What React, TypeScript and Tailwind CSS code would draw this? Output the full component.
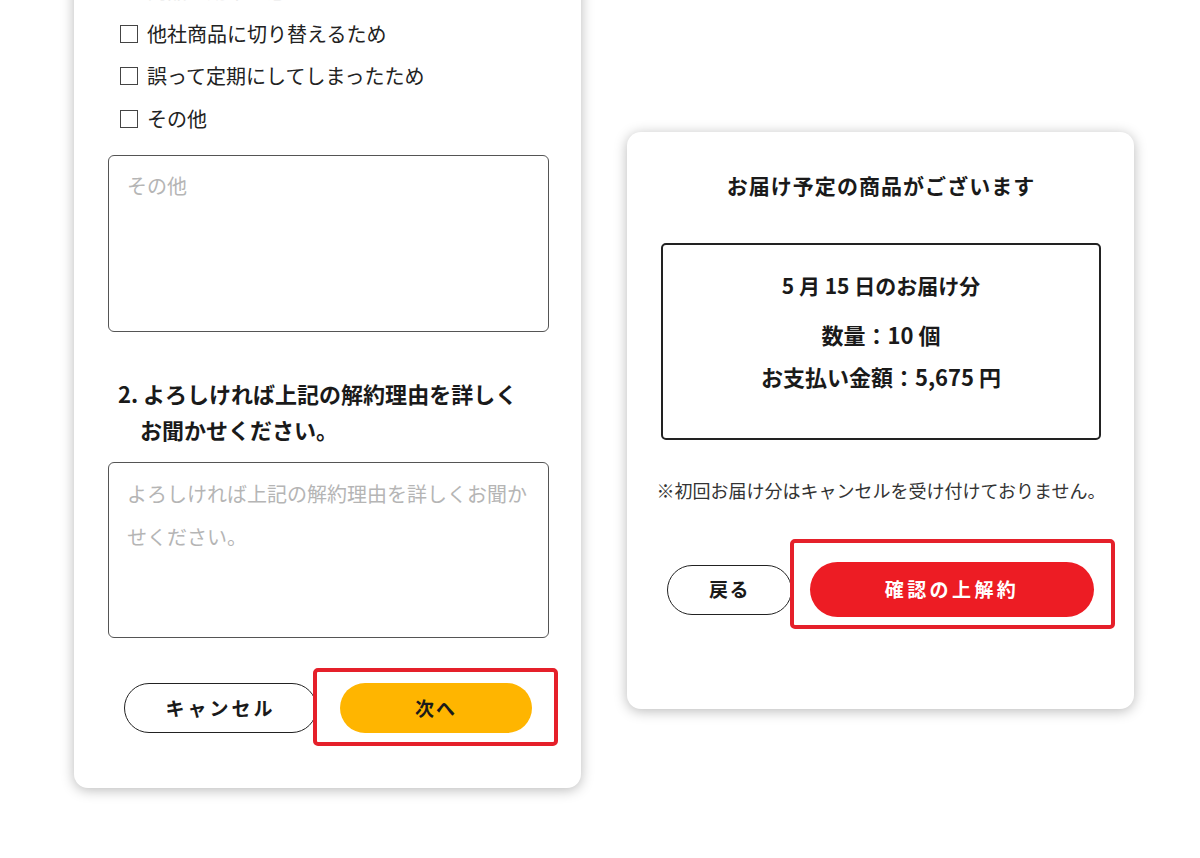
import React from "react";

const FONT = { fontFamily: '"Noto Sans CJK JP", "Noto Sans", sans-serif' };

function CheckRow({ label, faint }: { label: string; faint?: boolean }) {
  return (
    <div className="h-[42.5px] flex items-center pl-[12px]">
      <span
        className={`w-[18px] h-[18px] border ${faint ? "border-[#eeeeee]" : "border-[#444]"} bg-white shrink-0`}
      />
      <span className={`ml-[9px] text-[20px] leading-[30px] ${faint ? "text-[#e6e6e6]" : "text-[#222]"}`}>{label}</span>
    </div>
  );
}

export default function App() {
  return (
    <div
      className="w-[1200px] h-[858px] overflow-hidden bg-white flex items-start pl-[74px] gap-[46px]"
      style={FONT}
    >
      {/* Left card */}
      <div className="w-[507px] mt-[-60px] bg-white rounded-[14px] shadow-[0_2px_13px_rgba(0,0,0,0.28)] px-[34px] pt-[30px] pb-[55px] text-[#222]">
        <CheckRow label="商品の効果を感じられないため" faint />
        <CheckRow label="他社商品に切り替えるため" />
        <CheckRow label="誤って定期にしてしまったため" />
        <CheckRow label="その他" />

        <textarea
          placeholder="その他"
          className="mt-[15px] block w-[441px] h-[177px] resize-none border border-[#555] rounded-[6px] px-[18px] pt-[8px] text-[20px] leading-[43px] placeholder:text-[#b5b5b5] outline-none"
        />

        <h2 className="mt-[43px] pl-[32px] -indent-[22px] text-[22px] leading-[36px] font-bold text-[#1a1a1a]">
          2. よろしければ上記の解約理由を詳しく
          <br />
          お聞かせください。
        </h2>

        <textarea
          placeholder="よろしければ上記の解約理由を詳しくお聞かせください。"
          className="mt-[15px] block w-[441px] h-[176px] resize-none border border-[#555] rounded-[6px] px-[18px] pt-[9px] text-[20px] leading-[43px] placeholder:text-[#b5b5b5] outline-none"
        />

        <div className="mt-[45px] flex items-center pl-[16px] gap-[23px]">
          <button className="w-[193px] h-[50px] rounded-full border-[1.5px] border-[#222] bg-white text-[19px] font-bold tracking-[0.16em] text-[#1a1a1a]">
            キャンセル
          </button>
          <div className="relative">
            <button className="w-[192px] h-[50px] rounded-full bg-[#FFB500] text-[19px] font-bold tracking-[0.1em] text-[#1a1a1a]">
              次へ
            </button>
            <div className="absolute -left-[27px] -right-[26px] -top-[15px] -bottom-[13px] border-[4px] border-[#E5202A] rounded-[5px] pointer-events-none" />
          </div>
        </div>
      </div>

      {/* Right card */}
      <div className="w-[507px] mt-[132px] bg-white rounded-[14px] shadow-[0_2px_13px_rgba(0,0,0,0.28)] pl-[34px] pr-[33px] pt-[38px] pb-[92px] text-[#1a1a1a]">
        <h2 className="text-center text-[21px] leading-[30px] font-bold tracking-[0.05em]">
          お届け予定の商品がございます
        </h2>

        <div className="mt-[43px] border-[2px] border-[#222] rounded-[5px] pt-[25px] pb-[47px] text-center font-bold text-[22px] leading-[30px]">
          <p className="text-[21px]">5 月 15 日のお届け分</p>
          <p className="mt-[19px]">数量：10 個</p>
          <p className="mt-[12px]">お支払い金額：5,675 円</p>
        </div>

        <div className="mt-[37px] -mx-[16px] text-center whitespace-nowrap text-[18px] leading-[27px] text-[#333]">
          ※初回お届け分はキャンセルを受け付けておりません。
        </div>

        <div className="mt-[58px] flex items-center pl-[6px] gap-[18px]">
          <button className="w-[125px] h-[50px] rounded-full border-[1.5px] border-[#222] bg-white text-[19px] font-bold tracking-[0.08em] text-[#1a1a1a]">
            戻る
          </button>
          <div className="relative">
            <button className="w-[284px] h-[55px] rounded-full bg-[#ED1C24] text-[19px] font-bold tracking-[0.18em] text-white">
              確認の上解約
            </button>
            <div className="absolute -left-[20px] -right-[21px] -top-[23px] -bottom-[12px] border-[4px] border-[#E5202A] rounded-[5px] pointer-events-none" />
          </div>
        </div>
      </div>
    </div>
  );
}
